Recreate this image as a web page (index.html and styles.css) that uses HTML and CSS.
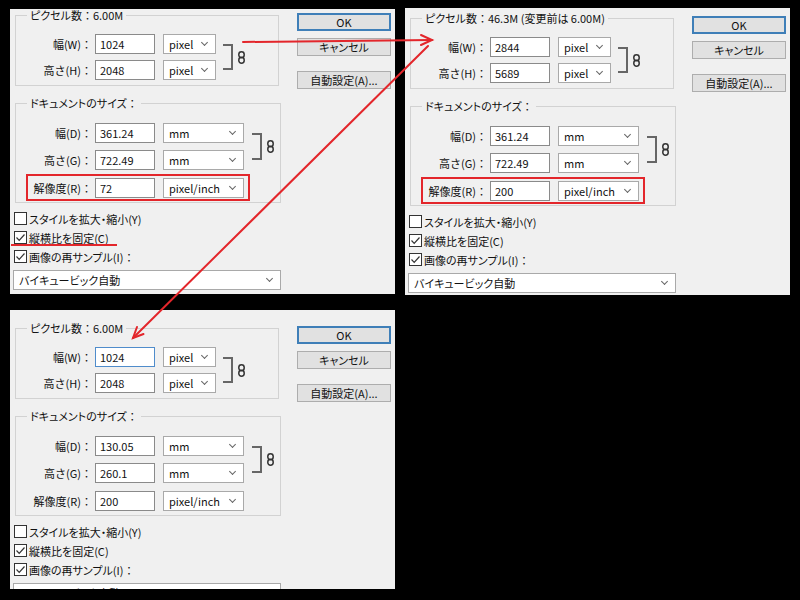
FILE: index.html
```html
<!DOCTYPE html>
<html lang="ja">
<head>
    <meta charset="UTF-8">
    <title>画像解像度</title>
    <link rel="stylesheet" href="styles.css">
</head>
<body>
    <div class="screen">
        <!-- before -->
        <div class="dialog d1">
            <div class="main">
                <fieldset class="group px">
                    <legend>ピクセル数<span class="c">：</span>6.00M</legend>
                    <div class="linked">
                        <div class="rows">
                            <div class="row"><label>幅(W)：</label><span class="field">1024</span><span class="combo short">pixel</span></div>
                            <div class="row"><label>高さ(H)：</label><span class="field">2048</span><span class="combo short">pixel</span></div>
                        </div>
                        <div class="bracket"></div>
                        <svg class="chain" width="7" height="13" viewBox="0 0 7 13"><rect x="0.8" y="0.8" width="5.4" height="6" rx="2.7" fill="none" stroke="#333" stroke-width="1.5"/><rect x="0.8" y="6.2" width="5.4" height="6" rx="2.7" fill="none" stroke="#333" stroke-width="1.5"/></svg>
                    </div>
                </fieldset>
                <fieldset class="group doc">
                    <legend>ドキュメントのサイズ<span class="c">：</span></legend>
                    <div class="linked">
                        <div class="rows">
                            <div class="row"><label>幅(D)：</label><span class="field">361.24</span><span class="combo long">mm</span></div>
                            <div class="row"><label>高さ(G)：</label><span class="field">722.49</span><span class="combo long">mm</span></div>
                        </div>
                        <div class="bracket"></div>
                        <svg class="chain" width="7" height="13" viewBox="0 0 7 13"><rect x="0.8" y="0.8" width="5.4" height="6" rx="2.7" fill="none" stroke="#333" stroke-width="1.5"/><rect x="0.8" y="6.2" width="5.4" height="6" rx="2.7" fill="none" stroke="#333" stroke-width="1.5"/></svg>
                    </div>
                    <div class="row res marked"><label>解像度(R)：</label><span class="field">72</span><span class="combo long">pixel/inch</span></div>
                </fieldset>
                <div class="checks">
                    <div class="check"><span class="box"></span>スタイルを拡大・縮小(Y)</div>
                    <div class="check underline"><span class="box"><svg width="11" height="11" viewBox="0 0 11 11"><polyline points="1.5,5.5 4.2,8.3 9.5,2.5" fill="none" stroke="#333" stroke-width="1.2"/></svg></span>縦横比を固定(C)</div>
                    <div class="check"><span class="box"><svg width="11" height="11" viewBox="0 0 11 11"><polyline points="1.5,5.5 4.2,8.3 9.5,2.5" fill="none" stroke="#333" stroke-width="1.2"/></svg></span>画像の再サンプル(I)<span class="c">：</span></div>
                </div>
                <div class="combo resample">バイキュービック自動</div>
            </div>
            <div class="buttons">
                <button class="default">OK</button>
                <button class="cancel">キャンセル</button>
                <button class="auto">自動設定(A)...</button>
            </div>
        </div>

        <!-- pixels resampled -->
        <div class="dialog d2">
            <div class="main">
                <fieldset class="group px">
                    <legend>ピクセル数<span class="c">：</span>46.3M (変更前は 6.00M)</legend>
                    <div class="linked">
                        <div class="rows">
                            <div class="row"><label>幅(W)：</label><span class="field">2844</span><span class="combo short">pixel</span></div>
                            <div class="row"><label>高さ(H)：</label><span class="field">5689</span><span class="combo short">pixel</span></div>
                        </div>
                        <div class="bracket"></div>
                        <svg class="chain" width="7" height="13" viewBox="0 0 7 13"><rect x="0.8" y="0.8" width="5.4" height="6" rx="2.7" fill="none" stroke="#333" stroke-width="1.5"/><rect x="0.8" y="6.2" width="5.4" height="6" rx="2.7" fill="none" stroke="#333" stroke-width="1.5"/></svg>
                    </div>
                </fieldset>
                <fieldset class="group doc">
                    <legend>ドキュメントのサイズ<span class="c">：</span></legend>
                    <div class="linked">
                        <div class="rows">
                            <div class="row"><label>幅(D)：</label><span class="field">361.24</span><span class="combo long">mm</span></div>
                            <div class="row"><label>高さ(G)：</label><span class="field">722.49</span><span class="combo long">mm</span></div>
                        </div>
                        <div class="bracket"></div>
                        <svg class="chain" width="7" height="13" viewBox="0 0 7 13"><rect x="0.8" y="0.8" width="5.4" height="6" rx="2.7" fill="none" stroke="#333" stroke-width="1.5"/><rect x="0.8" y="6.2" width="5.4" height="6" rx="2.7" fill="none" stroke="#333" stroke-width="1.5"/></svg>
                    </div>
                    <div class="row res marked"><label>解像度(R)：</label><span class="field">200</span><span class="combo long">pixel/inch</span></div>
                </fieldset>
                <div class="checks">
                    <div class="check"><span class="box"></span>スタイルを拡大・縮小(Y)</div>
                    <div class="check"><span class="box"><svg width="11" height="11" viewBox="0 0 11 11"><polyline points="1.5,5.5 4.2,8.3 9.5,2.5" fill="none" stroke="#333" stroke-width="1.2"/></svg></span>縦横比を固定(C)</div>
                    <div class="check"><span class="box"><svg width="11" height="11" viewBox="0 0 11 11"><polyline points="1.5,5.5 4.2,8.3 9.5,2.5" fill="none" stroke="#333" stroke-width="1.2"/></svg></span>画像の再サンプル(I)<span class="c">：</span></div>
                </div>
                <div class="combo resample">バイキュービック自動</div>
            </div>
            <div class="buttons">
                <button class="default">OK</button>
                <button class="cancel">キャンセル</button>
                <button class="auto">自動設定(A)...</button>
            </div>
        </div>

        <!-- document size changed -->
        <div class="dialog d3">
            <div class="main">
                <fieldset class="group px">
                    <legend>ピクセル数<span class="c">：</span>6.00M</legend>
                    <div class="linked">
                        <div class="rows">
                            <div class="row"><label>幅(W)：</label><span class="field focus">1024</span><span class="combo short">pixel</span></div>
                            <div class="row"><label>高さ(H)：</label><span class="field">2048</span><span class="combo short">pixel</span></div>
                        </div>
                        <div class="bracket"></div>
                        <svg class="chain" width="7" height="13" viewBox="0 0 7 13"><rect x="0.8" y="0.8" width="5.4" height="6" rx="2.7" fill="none" stroke="#333" stroke-width="1.5"/><rect x="0.8" y="6.2" width="5.4" height="6" rx="2.7" fill="none" stroke="#333" stroke-width="1.5"/></svg>
                    </div>
                </fieldset>
                <fieldset class="group doc">
                    <legend>ドキュメントのサイズ<span class="c">：</span></legend>
                    <div class="linked">
                        <div class="rows">
                            <div class="row"><label>幅(D)：</label><span class="field">130.05</span><span class="combo long">mm</span></div>
                            <div class="row"><label>高さ(G)：</label><span class="field">260.1</span><span class="combo long">mm</span></div>
                        </div>
                        <div class="bracket"></div>
                        <svg class="chain" width="7" height="13" viewBox="0 0 7 13"><rect x="0.8" y="0.8" width="5.4" height="6" rx="2.7" fill="none" stroke="#333" stroke-width="1.5"/><rect x="0.8" y="6.2" width="5.4" height="6" rx="2.7" fill="none" stroke="#333" stroke-width="1.5"/></svg>
                    </div>
                    <div class="row res"><label>解像度(R)：</label><span class="field">200</span><span class="combo long">pixel/inch</span></div>
                </fieldset>
                <div class="checks">
                    <div class="check"><span class="box"></span>スタイルを拡大・縮小(Y)</div>
                    <div class="check"><span class="box"><svg width="11" height="11" viewBox="0 0 11 11"><polyline points="1.5,5.5 4.2,8.3 9.5,2.5" fill="none" stroke="#333" stroke-width="1.2"/></svg></span>縦横比を固定(C)</div>
                    <div class="check"><span class="box"><svg width="11" height="11" viewBox="0 0 11 11"><polyline points="1.5,5.5 4.2,8.3 9.5,2.5" fill="none" stroke="#333" stroke-width="1.2"/></svg></span>画像の再サンプル(I)<span class="c">：</span></div>
                </div>
                <div class="combo resample">バイキュービック自動</div>
            </div>
            <div class="buttons">
                <button class="default">OK</button>
                <button class="cancel">キャンセル</button>
                <button class="auto">自動設定(A)...</button>
            </div>
        </div>

        <svg class="arrows" width="800" height="600" viewBox="0 0 800 600">
            <g fill="none" stroke="#e3262b" stroke-width="2" stroke-linecap="round">
                <line x1="243" y1="42" x2="432" y2="40"/>
                <polyline points="421,35 432,40 421,45"/>
                <line x1="428" y1="46" x2="133" y2="338"/>
                <polyline points="137,327 133,338 143.5,334"/>
            </g>
        </svg>
    </div>
</body>
</html>
```

FILE: styles.css
```css
body {
    margin: 0;
    background: #000;
    font-family: "Noto Sans CJK JP", sans-serif;
    font-size: 11px;
    font-feature-settings: "palt" 1;
    color: #111;
}

.screen {
    position: relative;
    width: 800px;
    height: 600px;
    box-sizing: border-box;
    padding-left: 10px;
    display: grid;
    grid-template-columns: 385px 385px;
    column-gap: 10px;
    align-content: start;
    align-items: start;
}

.dialog {
    background: #f0f0f0;
    display: flex;
    box-sizing: border-box;
}

.d1 {
    margin-top: 9px;
    height: 285px;
}

.d2 {
    margin-top: 8px;
    height: 287px;
    padding-top: 4px;
}

/* the last capture is cut off at the bottom */
.d3 {
    margin-top: 15px;
    height: 279px;
    padding-top: 12px;
    overflow: hidden;
}

/* full-width colon keeps its spacing */
.c {
    font-feature-settings: "palt" 0;
}

.main {
    width: 271px;
    flex: none;
}

.group {
    margin: 0 0 0 5px;
    padding: 13px 0 5px 0;
    border: 1px solid #d2d2d2;
    min-width: 0;
    box-sizing: border-box;
}

.group legend {
    line-height: 12px;
    padding: 0 3px;
    margin-left: 11px;
    white-space: nowrap;
}

.px {
    width: 264px;
}

.doc {
    width: 266px;
    margin-top: 11px;
    padding-top: 14px;
    padding-bottom: 4px;
}

.linked {
    display: flex;
    align-items: center;
}

.rows {
    display: flex;
    flex-direction: column;
    gap: 6px;
}

.doc .rows {
    gap: 7px;
}

.row {
    display: flex;
    align-items: center;
    height: 20px;
    position: relative;
}

.row label {
    width: 76px;
    margin-right: 3px;
    text-align: right;
    white-space: nowrap;
    font-feature-settings: "palt" 0;
}

.row.res {
    margin-top: 8px;
}

.field {
    width: 60px;
    height: 20px;
    box-sizing: border-box;
    margin-right: 8px;
    padding-left: 4px;
    border: 1px solid #8a8a8a;
    background: #fff;
    line-height: 18px;
}

.field.focus {
    border-color: #4f8ccb;
}

.combo {
    position: relative;
    height: 20px;
    box-sizing: border-box;
    padding-left: 5px;
    border: 1px solid #a9a9a9;
    background: #fff;
    line-height: 18px;
    white-space: nowrap;
}

.combo::after {
    content: "";
    position: absolute;
    right: 8px;
    top: 5px;
    width: 4px;
    height: 4px;
    border-right: 1px solid #666;
    border-bottom: 1px solid #666;
    transform: rotate(45deg);
}

.short {
    width: 53px;
}

.long {
    width: 81px;
}

.bracket {
    width: 10px;
    height: 26px;
    margin-left: 7px;
    box-sizing: border-box;
    border: 2px solid #666;
    border-left: none;
}

.doc .bracket {
    height: 27px;
    margin-left: 8px;
}

.chain {
    margin-left: 5px;
}

.marked::after {
    content: "";
    position: absolute;
    left: 10px;
    top: -4px;
    width: 224px;
    height: 27px;
    box-sizing: border-box;
    border: 2px solid #e3262b;
}

.checks {
    margin-top: 6px;
}

.check {
    position: relative;
    display: flex;
    align-items: center;
    height: 19px;
    white-space: nowrap;
}

.box {
    width: 13px;
    height: 13px;
    box-sizing: border-box;
    margin: 0 2px 0 4px;
    border: 1px solid #333;
    background: #fff;
    display: flex;
}

.underline::after {
    content: "";
    position: absolute;
    left: 1px;
    top: 16px;
    width: 106px;
    height: 2px;
    background: #e3262b;
}

.resample {
    width: 268px;
    margin: 4px 0 0 3px;
}

.buttons {
    width: 94px;
    margin-left: 16px;
    display: flex;
    flex-direction: column;
}

.buttons button {
    height: 18px;
    box-sizing: border-box;
    padding: 0;
    border: 1px solid #adadad;
    background: #e1e1e1;
    font: inherit;
    line-height: 16px;
    color: #111;
}

.buttons .default {
    margin-top: 4px;
    border: 2px solid #3f7fb8;
    line-height: 14px;
}

.buttons .cancel {
    margin-top: 7px;
}

.buttons .auto {
    margin-top: 15px;
}

.arrows {
    position: absolute;
    left: 0;
    top: 0;
    pointer-events: none;
}
```
